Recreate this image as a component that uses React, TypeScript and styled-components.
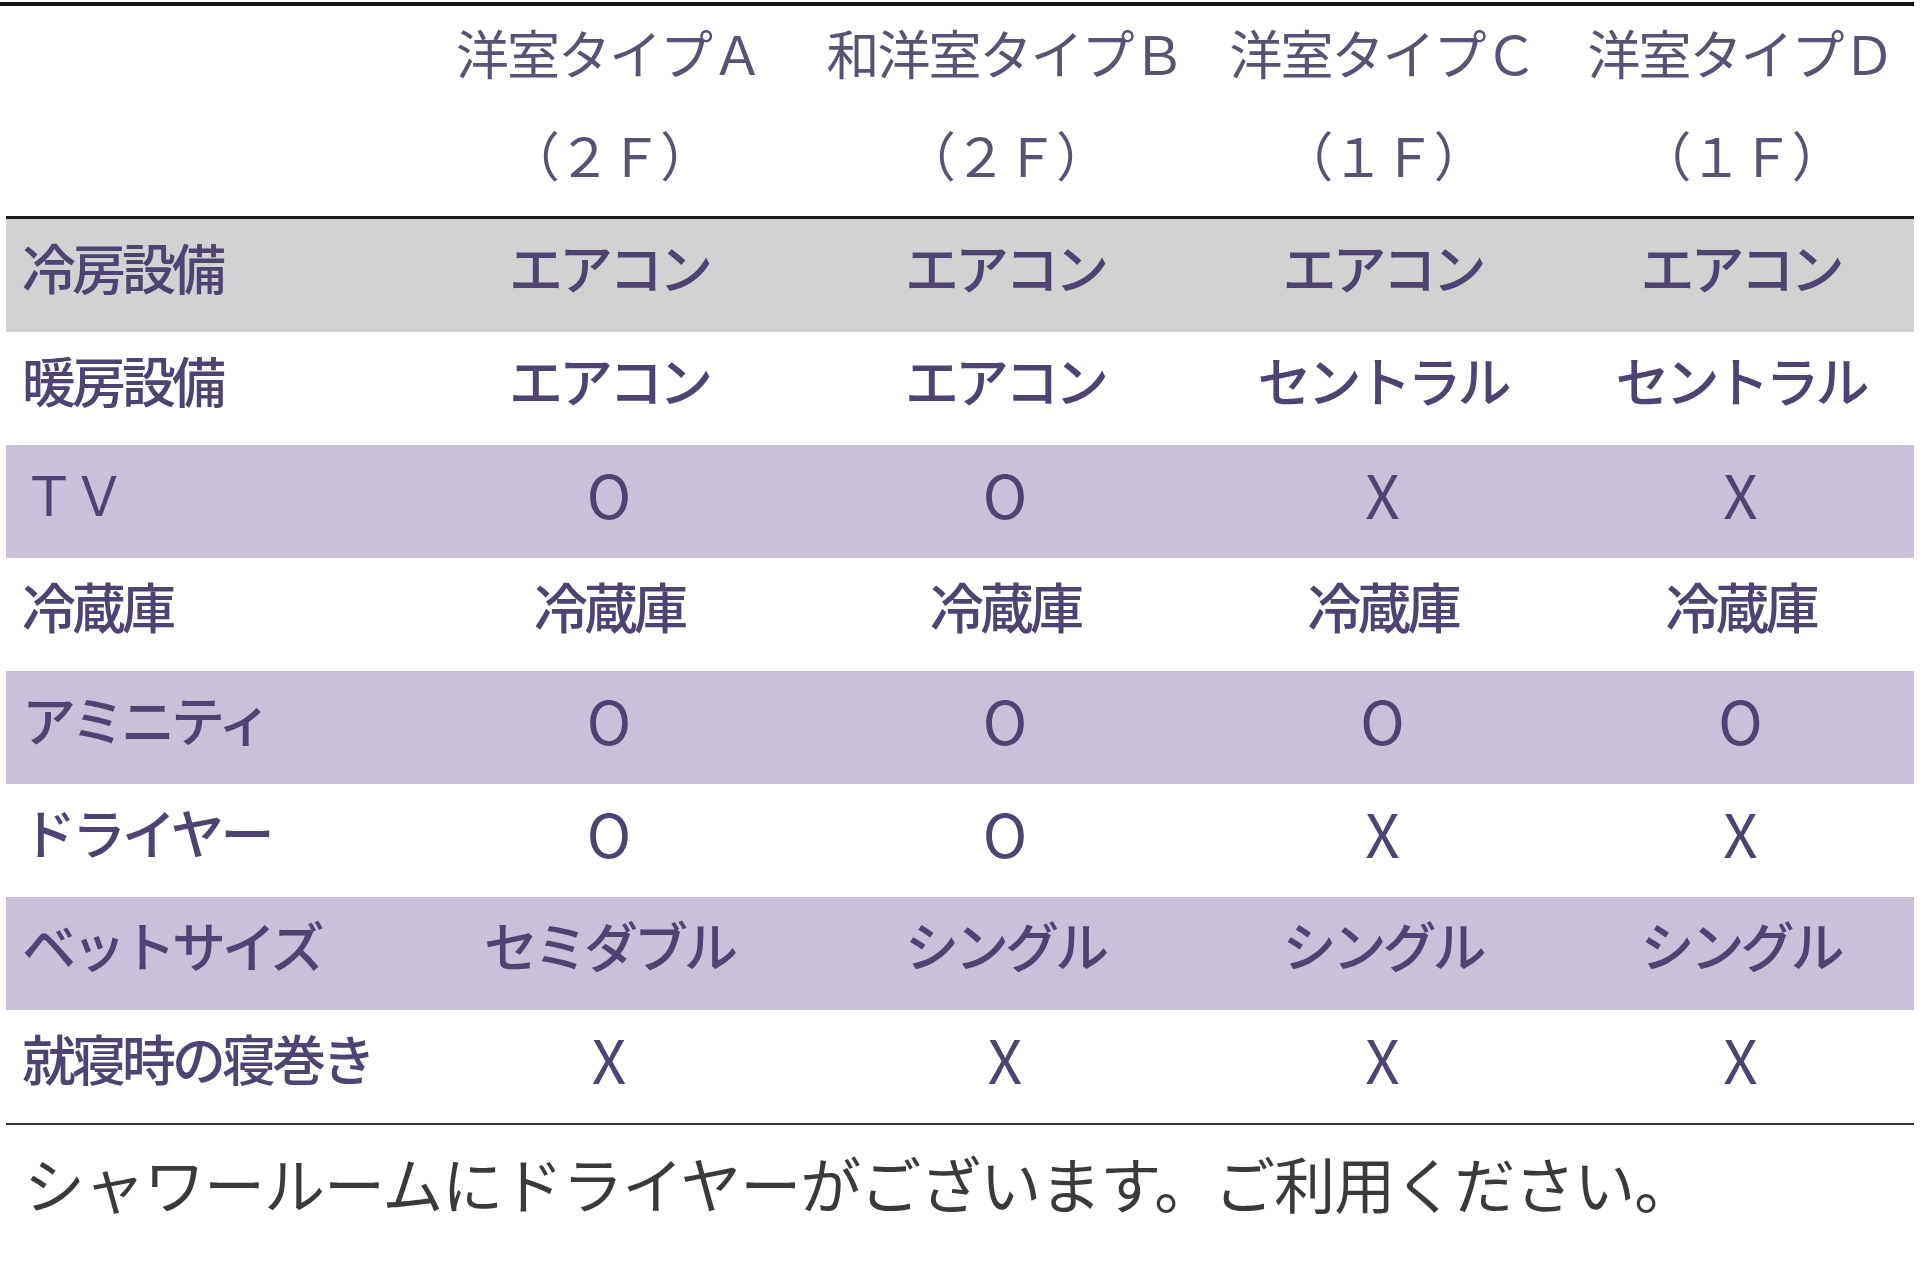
import React from 'react';
import styled, { createGlobalStyle } from 'styled-components';

const GlobalStyle = createGlobalStyle`
  html, body {
    margin: 0;
    padding: 0;
    background: #ffffff;
  }
  body {
    font-family: "Noto Sans CJK JP", "Noto Sans", sans-serif;
  }
`;

type TTone = 'gray' | 'purple' | 'white';

type TRow = {
  label: string;
  tone: TTone;
  latin?: boolean;
  values: string[];
};

const columns = [
  { name: '洋室タイプＡ', floor: '（２Ｆ）' },
  { name: '和洋室タイプＢ', floor: '（２Ｆ）' },
  { name: '洋室タイプＣ', floor: '（１Ｆ）' },
  { name: '洋室タイプＤ', floor: '（１Ｆ）' },
];

const rows: TRow[] = [
  { label: '冷房設備', tone: 'gray', values: ['エアコン', 'エアコン', 'エアコン', 'エアコン'] },
  { label: '暖房設備', tone: 'white', values: ['エアコン', 'エアコン', 'セントラル', 'セントラル'] },
  { label: 'ＴＶ', tone: 'purple', latin: true, values: ['O', 'O', 'X', 'X'] },
  { label: '冷蔵庫', tone: 'white', values: ['冷蔵庫', '冷蔵庫', '冷蔵庫', '冷蔵庫'] },
  { label: 'アミニティ', tone: 'purple', values: ['O', 'O', 'O', 'O'] },
  { label: 'ドライヤー', tone: 'white', values: ['O', 'O', 'X', 'X'] },
  { label: 'ベットサイズ', tone: 'purple', values: ['セミダブル', 'シングル', 'シングル', 'シングル'] },
  { label: '就寝時の寝巻き', tone: 'white', values: ['X', 'X', 'X', 'X'] },
];

const isMark = (v: string) => v === 'O' || v === 'X';

export default function App() {
  return (
    <>
      <GlobalStyle />
      <Page>
        <Table>
          <HeadRow>
            <HeadCell />
            {columns.map((c) => (
              <HeadCell key={c.name}>
                <span>{c.name}</span>
                <span>{c.floor}</span>
              </HeadCell>
            ))}
          </HeadRow>
          <Body>
            {rows.map((r) => (
              <Row key={r.label} $tone={r.tone}>
                <Label $latin={r.latin}>{r.label}</Label>
                {r.values.map((v, i) => (
                  <Cell key={i} $mark={isMark(v)}>
                    {v}
                  </Cell>
                ))}
              </Row>
            ))}
          </Body>
        </Table>
        <Note>シャワールームにドライヤーがございます。ご利用ください。</Note>
      </Page>
    </>
  );
}

const Page = styled.div`
  width: 1920px;
  height: 1280px;
  padding-top: 2px;
  box-sizing: border-box;
  background: #ffffff;
`;

const Table = styled.div`
  display: flex;
  flex-direction: column;
  width: 1914px;
  border-top: 4px solid #141414;
`;

const grid = `
  display: grid;
  grid-template-columns: 402px 402px 390px 365px 351px;
`;

const HeadRow = styled.div`
  ${grid}
  height: 210px;
  margin-left: 6px;
  border-bottom: 3px solid #1a1a1a;
`;

const HeadCell = styled.div`
  display: flex;
  flex-direction: column;
  align-items: center;
  font-size: 53px;
  line-height: 102px;
  margin-top: -5px;
  color: #5a5275;
  font-weight: 400;
  white-space: nowrap;
  letter-spacing: -2px;
`;

const Body = styled.div`
  display: flex;
  flex-direction: column;
  margin-left: 6px;
  border-bottom: 2px solid #333333;
`;

const toneBg: Record<TTone, string> = {
  gray: '#d2d2d2',
  purple: '#cbc0d9',
  white: '#ffffff',
};

const Row = styled.div<{ $tone: TTone }>`
  ${grid}
  height: 113px;
  box-sizing: border-box;
  padding-bottom: 18px;
  align-items: center;
  background: ${(p) => toneBg[p.$tone]};
`;

const Label = styled.div<{ $latin?: boolean }>`
  padding-left: 16px;
  font-size: 54px;
  font-weight: ${(p) => (p.$latin ? 400 : 500)};
  color: #4e4372;
  white-space: nowrap;
  letter-spacing: -4px;
`;

const Cell = styled.div<{ $mark: boolean }>`
  text-align: center;
  font-size: ${(p) => (p.$mark ? '60px' : '54px')};
  font-weight: ${(p) => (p.$mark ? 400 : 500)};
  color: #4e4372;
  white-space: nowrap;
  letter-spacing: ${(p) => (p.$mark ? '0' : '-4px')};
`;

const Note = styled.div`
  padding: 22px 0 0 24px;
  font-size: 61px;
  line-height: 72px;
  color: #3a3a3a;
  white-space: nowrap;
  letter-spacing: -1px;
`;
